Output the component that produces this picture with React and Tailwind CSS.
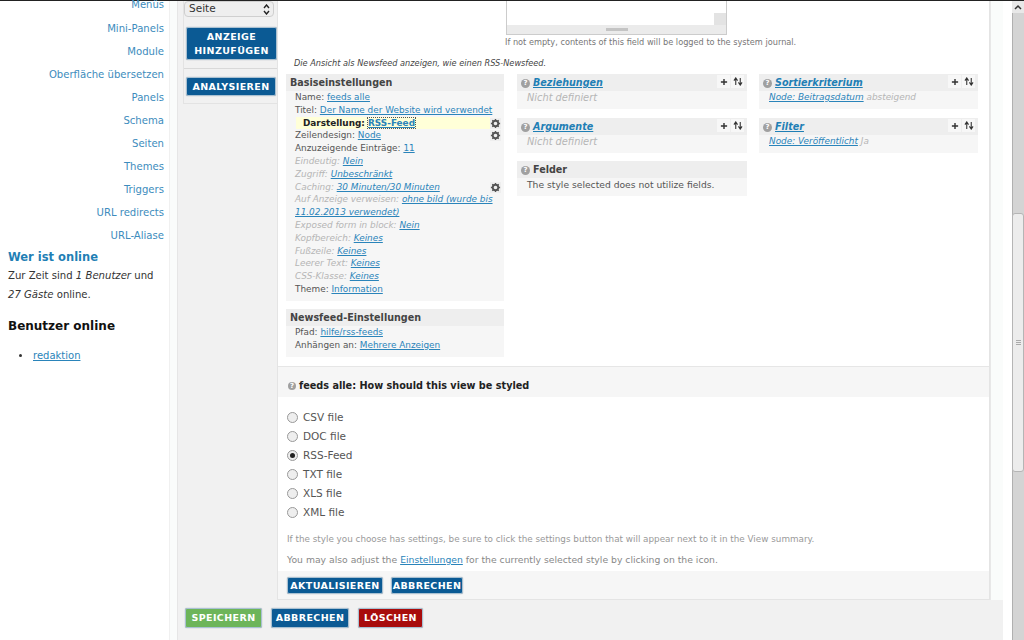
import React from "react";

const A = ({ children, className = "" }) => (
  <a className={`text-[#2a84ba] underline ${className}`}>{children}</a>
);

const Btn = ({ children, className = "bg-[#0b5a94]", w = "" }) => (
  <div className={`${className} ${w} flex items-center justify-center text-center text-white font-bold tracking-[0.4px] border border-[#a9c1d2] rounded-[2px] shadow-[0_0_1px_#789] text-[9.5px] leading-[14px]`}>
    {children}
  </div>
);

const Gear = () => (
  <svg width="11" height="11" viewBox="0 0 12 12" className="bg-[#eeeeee]">
    <circle cx="6" cy="6" r="3" fill="none" stroke="#555" strokeWidth="2" />
    <path d="M6 1v2M6 9v2M1 6h2M9 6h2M2.5 2.5l1.4 1.4M8.1 8.1l1.4 1.4M2.5 9.5l1.4-1.4M8.1 3.9l1.4-1.4" stroke="#555" strokeWidth="1.4" />
  </svg>
);

const Help = ({ size = 9 }) => (
  <span style={{ width: size, height: size }} className="rounded-full bg-[#a0a0a0] text-white text-[7px] leading-[9px] text-center font-bold shrink-0">?</span>
);

const Tools = () => (
  <div className="flex gap-px -mt-[3px]">
    <span className="w-[13px] h-[13px] bg-[#f7f7f7] flex items-center justify-center">
      <svg width="8" height="8" viewBox="0 0 9 9"><path d="M4.5 1v7M1 4.5h7" stroke="#333" strokeWidth="1.6" /></svg>
    </span>
    <span className="w-[13px] h-[13px] bg-[#f7f7f7] flex items-center justify-center">
      <svg width="10" height="9" viewBox="0 0 11 10"><path d="M3 9V2M1 4l2-3 2 3M8 1v7M6 6l2 3 2-3" stroke="#333" strokeWidth="1.2" fill="none" /></svg>
    </span>
  </div>
);

const Line = ({ label, muted, children, gear, highlight }) => (
  <div className={`relative leading-[12.8px] ${highlight ? "bg-[#ffffd8] ml-[10px] mr-[14px] pl-[7px] font-bold text-[#222]" : "pl-[9px]"} ${muted ? "text-[#b5b5b5] italic" : highlight ? "" : "text-[#555]"}`}>
    {label}: {children}
    {gear && <span className={`absolute top-[1px] ${highlight ? "right-[-11px]" : "right-[3px]"} flex`}><Gear /></span>}
  </div>
);

const Panel = ({ title, icon, link, tools, children, className = "" }) => (
  <div className={`bg-[#f6f6f6] ${className}`}>
    <div className="h-[17px] bg-[#eeeeee] flex items-center pl-[4px] pr-[3px] pt-[1px] gap-[3px]">
      {icon && <Help />}
      {link ? (
        <a className="text-[#1f7fb5] underline italic font-bold text-[9.6px] flex-1">{title}</a>
      ) : (
        <span className="text-[#444] font-bold text-[9.6px] flex-1">{title}</span>
      )}
      {tools && <Tools />}
    </div>
    {children}
  </div>
);

const Radio = ({ label, checked }) => (
  <div className="h-[19px] flex items-center gap-[5px] text-[10.5px] text-[#555]">
    <span className="w-[11px] h-[11px] rounded-full border border-[#999] bg-[#eeeeee] flex items-center justify-center">
      {checked && <span className="w-[5px] h-[5px] rounded-full bg-[#222]" />}
    </span>
    {label}
  </div>
);

const nav = ["Mini-Panels", "Module", "Oberfläche übersetzen", "Panels", "Schema", "Seiten", "Themes", "Triggers", "URL redirects", "URL-Aliase"];

export default function App() {
  return (
    <div className="w-[1024px] h-[640px] overflow-hidden bg-white flex flex-col font-['DejaVu_Sans',sans-serif] text-[8.9px]">
      <div className="h-[1px] bg-[#222] shrink-0" />
      <div className="flex flex-1 min-h-0">
        <aside className="w-[170px] shrink-0 border-r border-[#f0f0f0]">
          <div className="h-[7px] text-right pr-[5px] text-[#3d8cbd] text-[10px] leading-[8px]">Menüs</div>
          <div className="flex flex-col items-end pr-[5px] pt-[14px] gap-[10px] text-[10.1px] leading-[13px] text-[#3d8cbd]">
            {nav.map((n) => <div key={n}>{n}</div>)}
          </div>
          <div className="pl-[8px] pt-[8px]">
            <div className="text-[#1f7fb5] font-bold text-[11.5px] leading-[14px]">Wer ist online</div>
            <div className="text-[#333] text-[10.1px] leading-[19px] mt-[2px]">
              Zur Zeit sind <i>1 Benutzer</i> und<br /><i>27 Gäste</i> online.
            </div>
            <div className="font-bold text-[#111] text-[12px] leading-[14px] mt-[15px]">Benutzer online</div>
            <ul className="mt-[16px] ml-[11px] list-disc list-inside text-[10px] leading-[14px] text-[#333]">
              <li><A>redaktion</A></li>
            </ul>
          </div>
        </aside>
        <div className="w-[8px] shrink-0 bg-[#fafcfb] border-r border-[#e6e6e6]" />
        <main className="w-[825px] shrink-0 bg-[#f1f1f1] flex flex-col">
          <div className="flex h-[599px] shrink-0">
            <div className="w-[99px] pl-[5px] shrink-0">
              <div className="h-[103px] border-b border-l border-[#e3e3e3]">
                <div className="w-[90px] h-[16px] rounded-[4px] border border-[#cfcfcf] bg-[#eeeeee] flex items-center justify-between pl-[4px] pr-[3px] text-[10.5px] text-[#333]">
                  Seite
                  <svg width="7" height="11" viewBox="0 0 7 11"><path d="M1 4l2.5-3L6 4M1 7l2.5 3L6 7" fill="none" stroke="#222" strokeWidth="1.4" /></svg>
                </div>
                <Btn w="ml-[2px] mt-[10px] h-[33px] w-[91px]">ANZEIGE<br />HINZUFÜGEN</Btn>
                <div className="h-px bg-[#d9d9d9] mt-[8px]" />
                <Btn w="ml-[2px] mt-[8px] h-[19px] w-[90px]">ANALYSIEREN</Btn>
              </div>
            </div>
            <div className="w-[713px] shrink-0 bg-white border-l border-r border-[#e4e4e4] flex flex-col">
              <div className="ml-[228px] w-[221px] h-[34px] border border-t-0 border-[#cccccc] relative">
                <div className="absolute left-0 right-0 bottom-0 h-[9px] bg-[#ebebeb] flex items-center justify-center">
                  <div className="w-[22px] h-[3px] bg-[#c4c4c4]" />
                </div>
                <div className="absolute right-0 bottom-[9px] w-[12px] h-[12px] bg-[#e3e3e3]" />
              </div>
              <div className="ml-[227px] mt-[1px] leading-[12px] text-[8.2px] text-[#777]">If not empty, contents of this field will be logged to the system journal.</div>
              <div className="ml-[16px] mt-[9px] leading-[12px] italic text-[8.2px] text-[#444]">Die Ansicht als Newsfeed anzeigen, wie einen RSS-Newsfeed.</div>
              <div className="flex mt-[5px] pl-[8px] h-[292px] shrink-0">
                <div className="w-[218px] shrink-0">
                  <Panel title="Basiseinstellungen" className="h-[227px]">
                    <Line label="Name"><A>feeds alle</A></Line>
                    <Line label="Titel"><A>Der Name der Website wird verwendet</A></Line>
                    <Line label="Darstellung" highlight gear><A className="outline-dotted outline-1 outline-[#555]">RSS-Feed</A></Line>
                    <Line label="Zeilendesign" gear><A>Node</A></Line>
                    <Line label="Anzuzeigende Einträge"><A>11</A></Line>
                    <Line label="Eindeutig" muted><A>Nein</A></Line>
                    <Line label="Zugriff" muted><A>Unbeschränkt</A></Line>
                    <Line label="Caching" muted gear><A>30 Minuten/30 Minuten</A></Line>
                    <Line label="Auf Anzeige verweisen" muted><A>ohne bild (wurde bis 11.02.2013 verwendet)</A></Line>
                    <Line label="Exposed form in block" muted><A>Nein</A></Line>
                    <Line label="Kopfbereich" muted><A>Keines</A></Line>
                    <Line label="Fußzeile" muted><A>Keines</A></Line>
                    <Line label="Leerer Text" muted><A>Keines</A></Line>
                    <Line label="CSS-Klasse" muted><A>Keines</A></Line>
                    <Line label="Theme"><A>Information</A></Line>
                  </Panel>
                  <Panel title="Newsfeed-Einstellungen" className="mt-[8px] h-[48px]">
                    <Line label="Pfad"><A>hilfe/rss-feeds</A></Line>
                    <Line label="Anhängen an"><A>Mehrere Anzeigen</A></Line>
                  </Panel>
                </div>
                <div className="w-[230px] ml-[13px] shrink-0">
                  <Panel title="Beziehungen" icon link tools className="h-[35px]">
                    <div className="pl-[10px] text-[9.8px] italic text-[#b5b5b5] leading-[13px]">Nicht definiert</div>
                  </Panel>
                  <Panel title="Argumente" icon link tools className="h-[35px] mt-[9px]">
                    <div className="pl-[10px] text-[9.8px] italic text-[#b5b5b5] leading-[13px]">Nicht definiert</div>
                  </Panel>
                  <Panel title="Felder" icon className="h-[35px] mt-[8px]">
                    <div className="pl-[10px] text-[9.2px] text-[#555] leading-[13px]">The style selected does not utilize fields.</div>
                  </Panel>
                </div>
                <div className="w-[219px] ml-[12px] shrink-0">
                  <Panel title="Sortierkriterium" icon link tools className="h-[35px]">
                    <div className="pl-[10px] italic text-[#b5b5b5] leading-[13px]"><A>Node: Beitragsdatum</A> absteigend</div>
                  </Panel>
                  <Panel title="Filter" icon link tools className="h-[35px] mt-[9px]">
                    <div className="pl-[10px] italic text-[#b5b5b5] leading-[13px]"><A>Node: Veröffentlicht</A> Ja</div>
                  </Panel>
                </div>
              </div>
              <div className="h-[31px] bg-[#f6f6f6] border-t border-[#e6e6e6] flex items-center gap-[3px] pl-[10px] pt-[8px] shrink-0">
                <Help size={8} />
                <span className="font-bold text-[9.7px] text-[#222]">feeds alle: How should this view be styled</span>
              </div>
              <div className="pl-[9px] pt-[11px] flex flex-col">
                <Radio label="CSV file" />
                <Radio label="DOC file" />
                <Radio label="RSS-Feed" checked />
                <Radio label="TXT file" />
                <Radio label="XLS file" />
                <Radio label="XML file" />
              </div>
              <div className="pl-[9px] mt-[11px] text-[#999] text-[8.8px] leading-[12px]">If the style you choose has settings, be sure to click the settings button that will appear next to it in the View summary.</div>
              <div className="pl-[9px] mt-[9px] text-[#888] text-[9.25px] leading-[12px]">You may also adjust the <A>Einstellungen</A> for the currently selected style by clicking on the icon.</div>
              <div className="flex-1 mt-[5px] bg-[#f6f6f6] flex items-start gap-[8px] pl-[9px] pt-[6px] border-b border-[#e4e4e4]">
                <Btn w="h-[17px] w-[96px]">AKTUALISIEREN</Btn>
                <Btn w="h-[17px] w-[72px]">ABBRECHEN</Btn>
              </div>
            </div>
            <div className="flex-1 bg-[#fafcfb] border-l border-[#e8e8e8]" />
          </div>
          <div className="flex gap-[9px] pl-[7px] pt-[8px]">
            <Btn className="bg-[#6db55a]" w="h-[20px] w-[77px]">SPEICHERN</Btn>
            <Btn w="h-[20px] w-[78px]">ABBRECHEN</Btn>
            <Btn className="bg-[#a80c0c]" w="h-[20px] w-[65px]">LÖSCHEN</Btn>
          </div>
        </main>
        <div className="w-[9px] shrink-0 bg-white" />
        <div className="w-[12px] shrink-0 bg-[#d4d4d4] border-l border-[#b0b0b0] relative">
          <div className="absolute -left-px top-0 w-[12px] h-[12px] bg-[#e8e8e8] flex items-center justify-center">
            <svg width="8" height="6" viewBox="0 0 8 6"><path d="M1 5l3-3 3 3" fill="none" stroke="#333" strokeWidth="1.5" /></svg>
          </div>
          <div className="absolute -left-px top-[212px] w-[12px] h-[259px] rounded-[3px] bg-[#ececec] border border-[#b5b5b5] flex flex-col items-center justify-center gap-px">
            <div className="w-[5px] h-px bg-[#aaaaaa]" />
            <div className="w-[5px] h-px bg-[#aaaaaa]" />
            <div className="w-[5px] h-px bg-[#aaaaaa]" />
          </div>
        </div>
      </div>
    </div>
  );
}
